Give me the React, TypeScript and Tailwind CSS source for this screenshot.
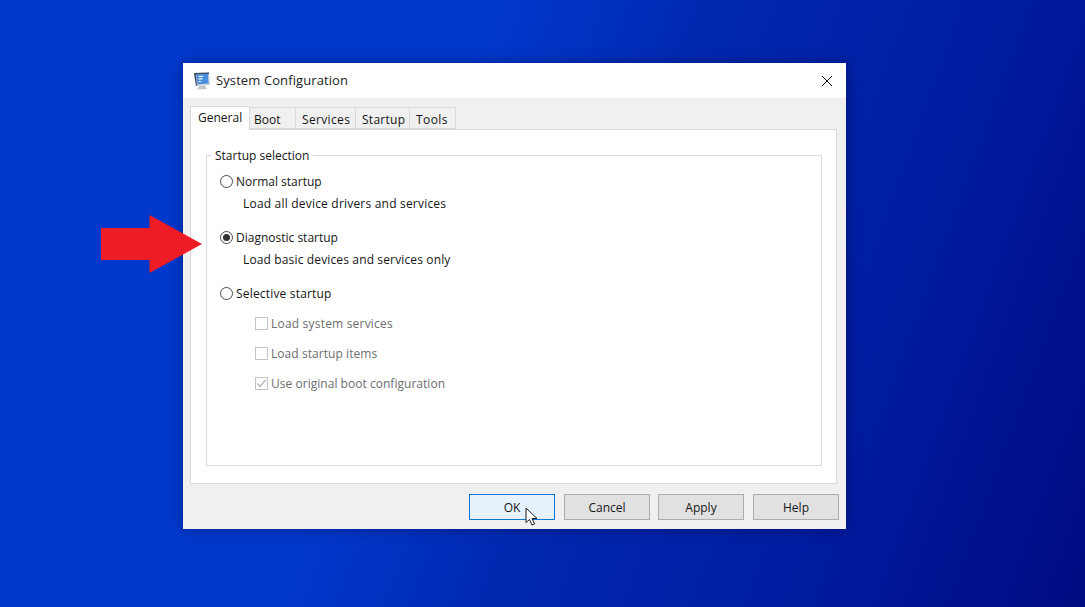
const tabs = [
  { label: "Boot", width: "w-[47px]", pad: "pl-[4px]", track: "" },
  { label: "Services", width: "w-[61px]", pad: "pl-[6px]", track: "tracking-[0.35px]" },
  { label: "Startup", width: "w-[55px]", pad: "pl-[6px]", track: "tracking-[0.28px]" },
  { label: "Tools", width: "w-[47px]", pad: "pl-[6px]", track: "tracking-[0.4px]" },
];

const Radio = ({ label, checked, track = "" }: { label: string; checked?: boolean; track?: string }) => (
  <div className="flex h-[16px] items-center">
    <span className="-mt-[2px] flex h-[13px] w-[13px] items-center justify-center rounded-full border border-[#4a4a4a] bg-white">
      {checked && <span className="h-[7px] w-[7px] rounded-full bg-[#333333]" />}
    </span>
    <span className={`ml-[3px] ${track}`}>{label}</span>
  </div>
);

const Check = ({ label, checked, track = "" }: { label: string; checked?: boolean; track?: string }) => (
  <div className="ml-[35px] flex h-[16px] items-center text-[#6d6d6d]">
    <span className="-mt-[2px] flex h-[13px] w-[13px] items-center justify-center border border-[#c4c4c4] bg-white">
      {checked && (
        <svg width="11" height="11" viewBox="0 0 11 11" fill="none">
          <path d="M1.5 5.5 L4 8.5 L9.5 2" stroke="#b0b0b0" strokeWidth="1.2" />
        </svg>
      )}
    </span>
    <span className={`ml-[3px] ${track}`}>{label}</span>
  </div>
);

const AppIcon = () => (
  <svg width="18" height="18" viewBox="0 0 18 18">
    <path d="M1 1 L16 0.5 L17 13 L3 14 Z" fill="#c9ced6" />
    <path d="M1 1 L16 0.5 L16 2 L3 2.5 L4 13.8 L3 14 Z" fill="#3c4a68" />
    <path d="M3.5 2.5 L15 2 L15.5 11.5 L4.5 12.2 Z" fill="#4a8ee0" />
    <path d="M5.5 4 L10 3.8 L10 5 L5.5 5.2 Z M5.5 6.5 L9.5 6.3 L9.5 7.5 L5.5 7.7 Z M5.5 9 L8 8.9 L8 10 L5.5 10.1 Z" fill="#e8f2fc" />
    <path d="M6 14 L12 13.5 L14 17 L4 17.5 Z" fill="#c2c6cc" />
  </svg>
);

const Cursor = () => (
  <svg width="14" height="20" viewBox="0 0 14 20">
    <path
      d="M1 1 L1 15.5 L4.5 12.5 L7 18 L9.5 17 L7 11.5 L12 11.5 Z"
      fill="#ffffff"
      stroke="#1a1a1a"
      strokeWidth="1"
    />
  </svg>
);

const btn = "flex h-[26px] w-[86px] items-center justify-center border pt-[1px]";
const btnGray = "border-[#adadad] bg-[#e1e1e1]";

export default function App() {
  return (
    <div className="relative h-[607px] w-[1085px] overflow-hidden bg-[linear-gradient(110deg,#0038cc_0%,#0038cc_38%,#0028b0_55%,#00189a_83%,#000a80_100%)] pl-[183px] pt-[63px] font-['Open_Sans','Noto_Sans',sans-serif] text-[12px] text-[#151515]">
      {/* window */}
      <div className="flex h-[466px] w-[663px] flex-col bg-[#f0f0f0] shadow-[0_0_12px_rgba(0,0,40,0.4)]">
        <div className="flex h-[35px] items-center bg-white pl-[10px] pr-[13px]">
          <AppIcon />
          <span className="ml-[5px] text-[13px] tracking-[0.1px] text-[#222222]">System Configuration</span>
          <svg className="ml-auto" width="12" height="12" viewBox="0 0 12 12">
            <path d="M1 1 L11 11 M11 1 L1 11" stroke="#111111" strokeWidth="1" />
          </svg>
        </div>

        <div className="flex flex-1 flex-col pl-[7px] pt-[8px]">
          {/* tabs */}
          <div className="flex h-[23px] items-end">
            <div className="z-10 -mb-px h-[24px] w-[60px] border border-b-0 border-[#d9d9d9] bg-white pl-[7px] pt-[2px]">
              General
            </div>
            {tabs.map((t) => (
              <div
                key={t.label}
                className={`-ml-px h-[22px] border border-[#d9d9d9] bg-[#f0f0f0] pt-[3px] leading-[18px] ${t.width} ${t.pad} ${t.track}`}
              >
                {t.label}
              </div>
            ))}
          </div>

          {/* tab panel */}
          <div className="h-[355px] w-[647px] border border-[#d9d9d9] bg-white pl-[15px] pt-[16px]">
            <fieldset className="h-[320px] w-[616px] border border-[#dcdcdc]">
              <legend className="ml-[4px] px-[4px] pt-[2px] leading-[16px]">Startup selection</legend>
              <div className="mt-[10px] pl-[13px]">
                <Radio label="Normal startup" />
                <p className="ml-[23px] mt-[6px] leading-[16px] tracking-[0.2px]">Load all device drivers and services</p>
                <div className="mt-[18px]">
                  <Radio label="Diagnostic startup" checked />
                </div>
                <p className="ml-[23px] mt-[6px] leading-[16px] tracking-[0.14px]">Load basic devices and services only</p>
                <div className="mt-[18px]">
                  <Radio label="Selective startup" track="tracking-[0.18px]" />
                </div>
                <div className="mt-[14px] flex flex-col gap-[14px]">
                  <Check label="Load system services" track="tracking-[0.2px]" />
                  <Check label="Load startup items" track="tracking-[0.06px]" />
                  <Check label="Use original boot configuration" checked track="tracking-[0.03px]" />
                </div>
              </div>
            </fieldset>
          </div>

          {/* buttons */}
          <div className="ml-[279px] mt-[10px] flex">
            <div className={`${btn} border-[#0078d7] bg-[#e5f1fb]`}>OK</div>
            <div className={`${btn} ${btnGray} ml-[9px]`}>Cancel</div>
            <div className={`${btn} ${btnGray} ml-[8px]`}>Apply</div>
            <div className={`${btn} ${btnGray} ml-[9px]`}>Help</div>
          </div>
        </div>
      </div>

      {/* red arrow annotation */}
      <svg className="absolute left-[100px] top-[214px]" width="106" height="60" viewBox="0 0 106 60">
        <path d="M1 14 L49.5 14 L49.5 1 L102 30 L49.5 59 L49.5 46 L1 46 Z" fill="#ee1c25" />
      </svg>

      {/* mouse cursor */}
      <div className="absolute left-[525px] top-[507px]">
        <Cursor />
      </div>
    </div>
  );
}
